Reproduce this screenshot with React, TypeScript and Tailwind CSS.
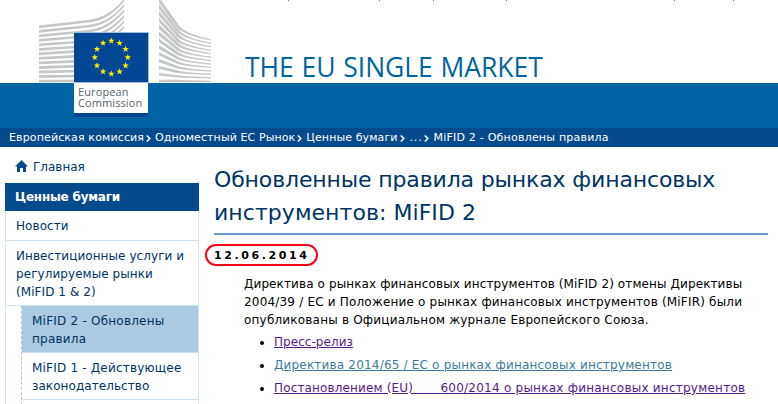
import type { ReactNode } from "react";

// tapered stripes of the left wing, [index 0 = top]
const leftStripes = Array.from({ length: 13 }, (_, i) => {
  const y = 26.8 + i * 4.52;
  const k = 1 - i / 12;
  const mid = y - 5.6 * k;
  const end = i * 5.4;
  return i < 6
    ? `M39 ${y - 1.4} L88 ${mid - 1.2} Q108 ${mid - 3} 124 ${end - 1.2} V${end + 1.2} Q108 ${mid} 88 ${mid + 1.2} L39 ${y + 1.4} Z`
    : `M39 ${y - 1.4} L80 ${mid - 1.3} V${mid + 1.3} L39 ${y + 1.4} Z`;
});

const rightStripes = Array.from({ length: 13 }, (_, i) => {
  const k = 1 - i / 12;
  const a = i * 6.75;
  const b = 40 + i * 3.44;
  const bend = 34.5 + i * 3.88;
  return `M159 ${a - 1.2 - 1.8 * k} L178 ${bend - 1.2 - 9 * k} Q184 ${bend - 0.8} 211 ${b - 0.6} V${b + 0.6} Q184 ${bend + 0.8} 177 ${bend + 1 - 8 * k} L159 ${a + 1.2 + 1.2 * k} Z`;
});

const stars = Array.from({ length: 12 }, (_, i) => {
  const angle = (i * Math.PI) / 6;
  return [111.3 + 16.5 * Math.sin(angle), 57.3 - 16.5 * Math.cos(angle)];
});

const Logo = () => (
  <svg className="absolute left-0 top-0" width="220" height="118" viewBox="0 0 220 118">
    <g fill="#c6c7c8">
      {leftStripes.map((d) => (
        <path key={d} d={d} />
      ))}
      {rightStripes.map((d) => (
        <path key={d} d={d} />
      ))}
    </g>
    <rect x="74" y="32" width="75" height="51" fill="#9dbbdc" />
    <rect x="74" y="33" width="74" height="49" fill="#034694" />
    <rect x="74" y="83" width="74" height="30" fill="#fff" />
    <rect x="74" y="113" width="74" height="4" fill="#034694" />
    <g fill="#ffed00">
      {stars.map(([x, y], i) => (
        <path
          key={i}
          transform={`translate(${x} ${y}) scale(3.5)`}
          d="M0-1 .235-.324 .951-.309 .38.124 .588.809 0 .4-.588.809-.38.124-.951-.309-.235-.324Z"
        />
      ))}
    </g>
  </svg>
);

const Crumb = ({ children, last }: { children: ReactNode; last?: boolean }) => (
  <span className="flex items-center">
    {children}
    {!last && (
      <svg className="ml-[2px] mr-[4px] mt-px" width="5" height="7" viewBox="0 0 5 7">
        <path d="M.8.5 3.8 3.5 .8 6.5" fill="none" stroke="#fff" strokeWidth="1.5" />
      </svg>
    )}
  </span>
);

const App = () => {
  return (
    <div className="h-[404px] w-[778px] overflow-hidden bg-white font-['Verdana','DejaVu_Sans',sans-serif] text-[12px] leading-[18px] text-black">
      <header className="relative flex h-[128px] flex-col">
        <div className="relative h-[83px] pl-[245px] pt-[47px]">
          {/* descenders of the language links above the fold */}
          <svg className="absolute left-0 top-0" width="778" height="1" viewBox="0 0 778 1">
            <path
              d="M288 0h1v1h-1zM379 0h1v1h-1zM433 0h1v1h-1zM506 0h1v1h-1zM674 0h1v1h-1zM733 0h1v1h-1z"
              fill="#4a7aae"
            />
          </svg>
          <h1 className="whitespace-nowrap font-['Open_Sans',sans-serif] text-[26.5px] leading-10 tracking-[-0.05px] [word-spacing:1px] text-[#0065a2]">
            THE EU SINGLE MARKET
          </h1>
        </div>
        <div className="h-[45px] bg-[#0065a2]" />
        <Logo />
        <div className="absolute left-[78px] top-[86px] font-['Open_Sans',sans-serif] text-[11px] text-[#58666d]">
          <div className="h-[11px] leading-[12px] tracking-[0.12px]">European</div>
          <div className="h-[11px] leading-[12px] tracking-[0.1px]">Commission</div>
        </div>
      </header>
      <nav className="flex h-[19px] items-center whitespace-nowrap bg-[#054a8b] pl-[9px] text-[11px] text-white">
        <Crumb>
          <span className="tracking-[0.13px]">Европейская комиссия</span>
        </Crumb>
        <Crumb>
          <span className="tracking-[0.1px]">Одноместный ЕС Рынок</span>
        </Crumb>
        <Crumb>
          <span className="tracking-[0.1px]">Ценные бумаги</span>
        </Crumb>
        <Crumb>
          <span className="ml-px tracking-[0.8px]">...</span>
        </Crumb>
        <Crumb last>
          <span className="tracking-[0.22px]">MiFID 2 - Обновлены правила</span>
        </Crumb>
      </nav>
      <div className="flex">
        <aside className="w-[199px] shrink-0 pl-[5px] text-[#003366]">
          <div className="flex h-[36px] items-center pl-[10px] pt-[4px]">
            <svg className="-mt-[3px] mr-[5px]" width="13" height="12" viewBox="0 0 13 12">
              <path d="M6.5 0 13 6.5H11V12H8V8H5V12H2V6.5H0Z" fill="#054a8b" />
            </svg>
            Главная
          </div>
          <h2 className="h-[28px] bg-[#054a8b] pl-[10px] text-[12px] font-bold leading-[29px] tracking-[-0.22px] text-white">
            Ценные бумаги
          </h2>
          <div className="whitespace-nowrap border-x border-[#cfe4f7] tracking-[0.07px]">
            <div className="h-[30px] border-b border-[#cfe4f7] pl-[10px] leading-[31px]">Новости</div>
            <div className="h-[65px] border-b border-[#cfe4f7] pl-[10px] pt-[6px]">
              Инвестиционные услуги и
              <br />
              регулируемые рынки
              <br />
              (MiFID 1 &amp; 2)
            </div>
            <div className="ml-[15px] border-l border-dashed border-[#b9b9d9]">
              <div className="h-[47px] border-b border-[#cfe4f7] bg-[#abcae0] pl-[10px] pt-[6px] tracking-[0.22px]">
                MiFID 2 - Обновлены
                <br />
                правила
              </div>
              <div className="h-[47px] border-b border-[#cfe4f7] pl-[10px] pt-[6px] tracking-[0.2px]">
                MiFID 1 - Действующее
                <br />
                <span className="tracking-[0.07px]">законодательство</span>
              </div>
              <div className="h-[10px]" />
            </div>
          </div>
        </aside>
        <main className="flex-1 whitespace-nowrap pl-[15px] pt-[16px]">
          <h1 className="h-[72px] w-[554px] border-b-2 border-[#6699cc] text-[22px] leading-[33px] text-[#003366]">
            <span className="tracking-[-0.14px]">Обновленные правила рынках финансовых</span>
            <br />
            <span className="tracking-[0.05px]">инструментов: MiFID 2</span>
          </h1>
          <div className="-ml-[9px] mt-[9px] flex h-[22px] w-[113px] items-center rounded-full border-2 border-[#fa0019] pl-[7px] pt-px text-[11px] font-bold tracking-[2.6px]">
            12.06.2014
          </div>
          <p className="ml-[30px] mt-[9px]">
            <span className="tracking-[0.11px]">
              Директива о рынках финансовых инструментов (MiFID 2) отмены Директивы
            </span>
            <br />
            <span className="tracking-[0.19px]">
              2004/39 / ЕС и Положение о рынках финансовых инструментов (MiFIR) были
            </span>
            <br />
            <span className="tracking-[0.2px]">
              опубликованы в Официальном журнале Европейского Союза.
            </span>
          </p>
          <ul className="ml-[60px] mt-[4px] flex list-disc flex-col gap-[5px]">
            <li>
              <a className="tracking-[0.05px] text-[#551a8b] underline">Пресс-релиз</a>
            </li>
            <li>
              <a className="tracking-[0.19px] text-[#3e7a9e] underline">
                Директива 2014/65 / ЕС о рынках финансовых инструментов
              </a>
            </li>
            <li>
              <a className="whitespace-pre text-[#551a8b] underline">
                <span className="tracking-[0.15px]">Постановлением (EU)</span>
                <span className="tracking-[-0.4px]">{"        "}</span>
                <span className="tracking-[0.24px]">600/2014 о рынках финансовых инструментов</span>
              </a>
            </li>
          </ul>
        </main>
      </div>
    </div>
  );
};

export default App;
